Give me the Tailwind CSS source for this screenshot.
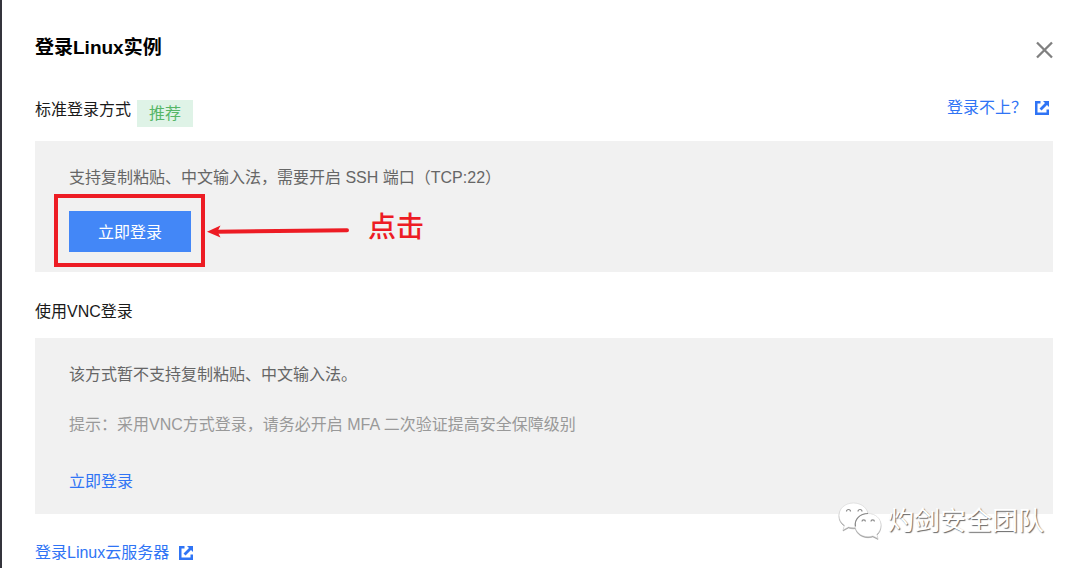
<!DOCTYPE html>
<html lang="zh-CN">
<head>
<meta charset="utf-8">
<title>登录Linux实例</title>
<script src="https://cdn.jsdelivr.net/npm/@tailwindcss/browser@4"></script>
</head>
<body class="bg-white font-['Liberation_Sans','Noto_Sans_CJK_SC',sans-serif] text-base leading-6 text-[#1a1a1a]">
<svg class="hidden" aria-hidden="true">
  <symbol id="external" viewBox="0 0 14 14">
    <path d="M5.500 0H0v14h14V8.500h-2.500v3H2.500V2.500h3z" fill="currentColor"/>
    <path d="M8 0h6v6l-2-2-5.500 5.500-2-2L10 2z" fill="currentColor"/>
  </symbol>
</svg>
<main class="relative min-h-screen border-l-2 border-[#34343c] pl-[33px] pr-[27px] pt-9">
  <header class="flex items-start justify-between">
    <h1 class="text-[19px] leading-6 font-bold text-black">登录Linux实例</h1>
    <button type="button" aria-label="关闭" class="mt-1 p-0 text-[#808080]">
      <svg class="block h-5 w-[17px]" viewBox="0 0 17 20" fill="none" stroke="currentColor" stroke-width="2.300"><path d="M1 2.500l15 15M16 2.500l-15 15"/></svg>
    </button>
  </header>

  <section>
    <div class="mt-9 flex items-start justify-between">
      <div class="flex items-start gap-1.5">
        <h2 class="pt-0.5">标准登录方式</h2>
        <span class="mt-1 bg-[#dff3e7] px-3 py-px leading-[25px] text-[#56b666]">推荐</span>
      </div>
      <a href="#" class="mr-1 flex items-center gap-2 text-[#2f74f5]">登录不上？<svg class="h-3.5 w-3.5"><use href="#external"/></svg></a>
    </div>
    <div class="mt-[14px] bg-[#f1f1f1] px-[34px] pt-[25px] pb-5 text-[#666]">
      <p>支持复制粘贴、中文输入法，需要开启 SSH 端口（TCP:22）</p>
      <div class="relative mt-[21px] w-fit">
        <button type="button" class="block h-[41px] w-[122px] bg-[#4387f7] pt-0.5 text-white">立即登录</button>
        <div class="pointer-events-none absolute -top-[17px] -left-[15px] h-[73px] w-[151px] border-4 border-[#ed1c24]"></div>
        <div class="pointer-events-none absolute top-0 left-[138px] flex items-start gap-[18px] text-[#ed1c24]">
          <svg class="mt-3 h-4 w-[143px]" viewBox="0 0 143 16"><path d="M10 8.700L140 7.300" stroke="currentColor" stroke-width="4" stroke-linecap="round"/><path d="M0 8.700L13.500 2.500 10.500 8.600 13.500 14.500z" fill="currentColor"/></svg>
          <span class="text-[28px] leading-[34px] font-medium whitespace-nowrap">点击</span>
        </div>
      </div>
    </div>
  </section>

  <section>
    <h2 class="mt-7 mb-[14px]">使用VNC登录</h2>
    <div class="bg-[#f1f1f1] px-[34px] pt-[25px] pb-5 text-[#666]">
      <p>该方式暂不支持复制粘贴、中文输入法。</p>
      <p class="mt-[26px] text-[#999]">提示：采用VNC方式登录，请务必开启 MFA 二次验证提高安全保障级别</p>
      <a href="#" class="mt-[33px] block w-fit text-[#2f74f5]">立即登录</a>
    </div>
  </section>

  <a href="#" class="mt-[27px] flex w-fit items-center gap-2.5 text-[#2f74f5]">登录Linux云服务器<svg class="h-3.5 w-3.5"><use href="#external"/></svg></a>

  <div class="pointer-events-none absolute right-9 bottom-7 flex items-center gap-1.5">
    <svg class="h-[38px] w-11 drop-shadow-[0_1px_0_#999]" viewBox="0 0 44 38" fill="#fff" stroke="#ccc" stroke-width="0.500">
      <path d="M15.500 1C7.200 1 1 6.500 1 13.500c0 4 2 7.400 5.500 9.700L5 28l5.500-3c1.600.5 3.300.8 5 .8 8.300 0 14.700-5.500 14.700-12.300S23.800 1 15.500 1z"/>
      <path d="M30 11.500c-7.400 0-13 5-13 11.500s5.600 11.700 13 11.700c1.800 0 3.400-.3 4.900-.8L40 36.500l-1.200-4.200c2.600-2.200 4.200-5.400 4.200-9.300 0-6.500-5.600-11.500-13-11.500z"/>
      <path d="M17.500 24.500c-1.500-7 4.500-13 12.500-13" fill="none" stroke="#888" stroke-width="1.200"/>
      <path d="M8.500 9.500a2 2 0 0 1 4 0M20 9.500a2 2 0 0 1 4 0M24 19.500a1.700 1.700 0 0 1 3.400 0M33 19.500a1.700 1.700 0 0 1 3.400 0" fill="none" stroke="#888" stroke-width="1.200"/>
    </svg>
    <span class="text-[26px] leading-9 whitespace-nowrap text-white text-shadow-[1px_1px_1px_#666]">灼剑安全团队</span>
  </div>
</main>
</body>
</html>
